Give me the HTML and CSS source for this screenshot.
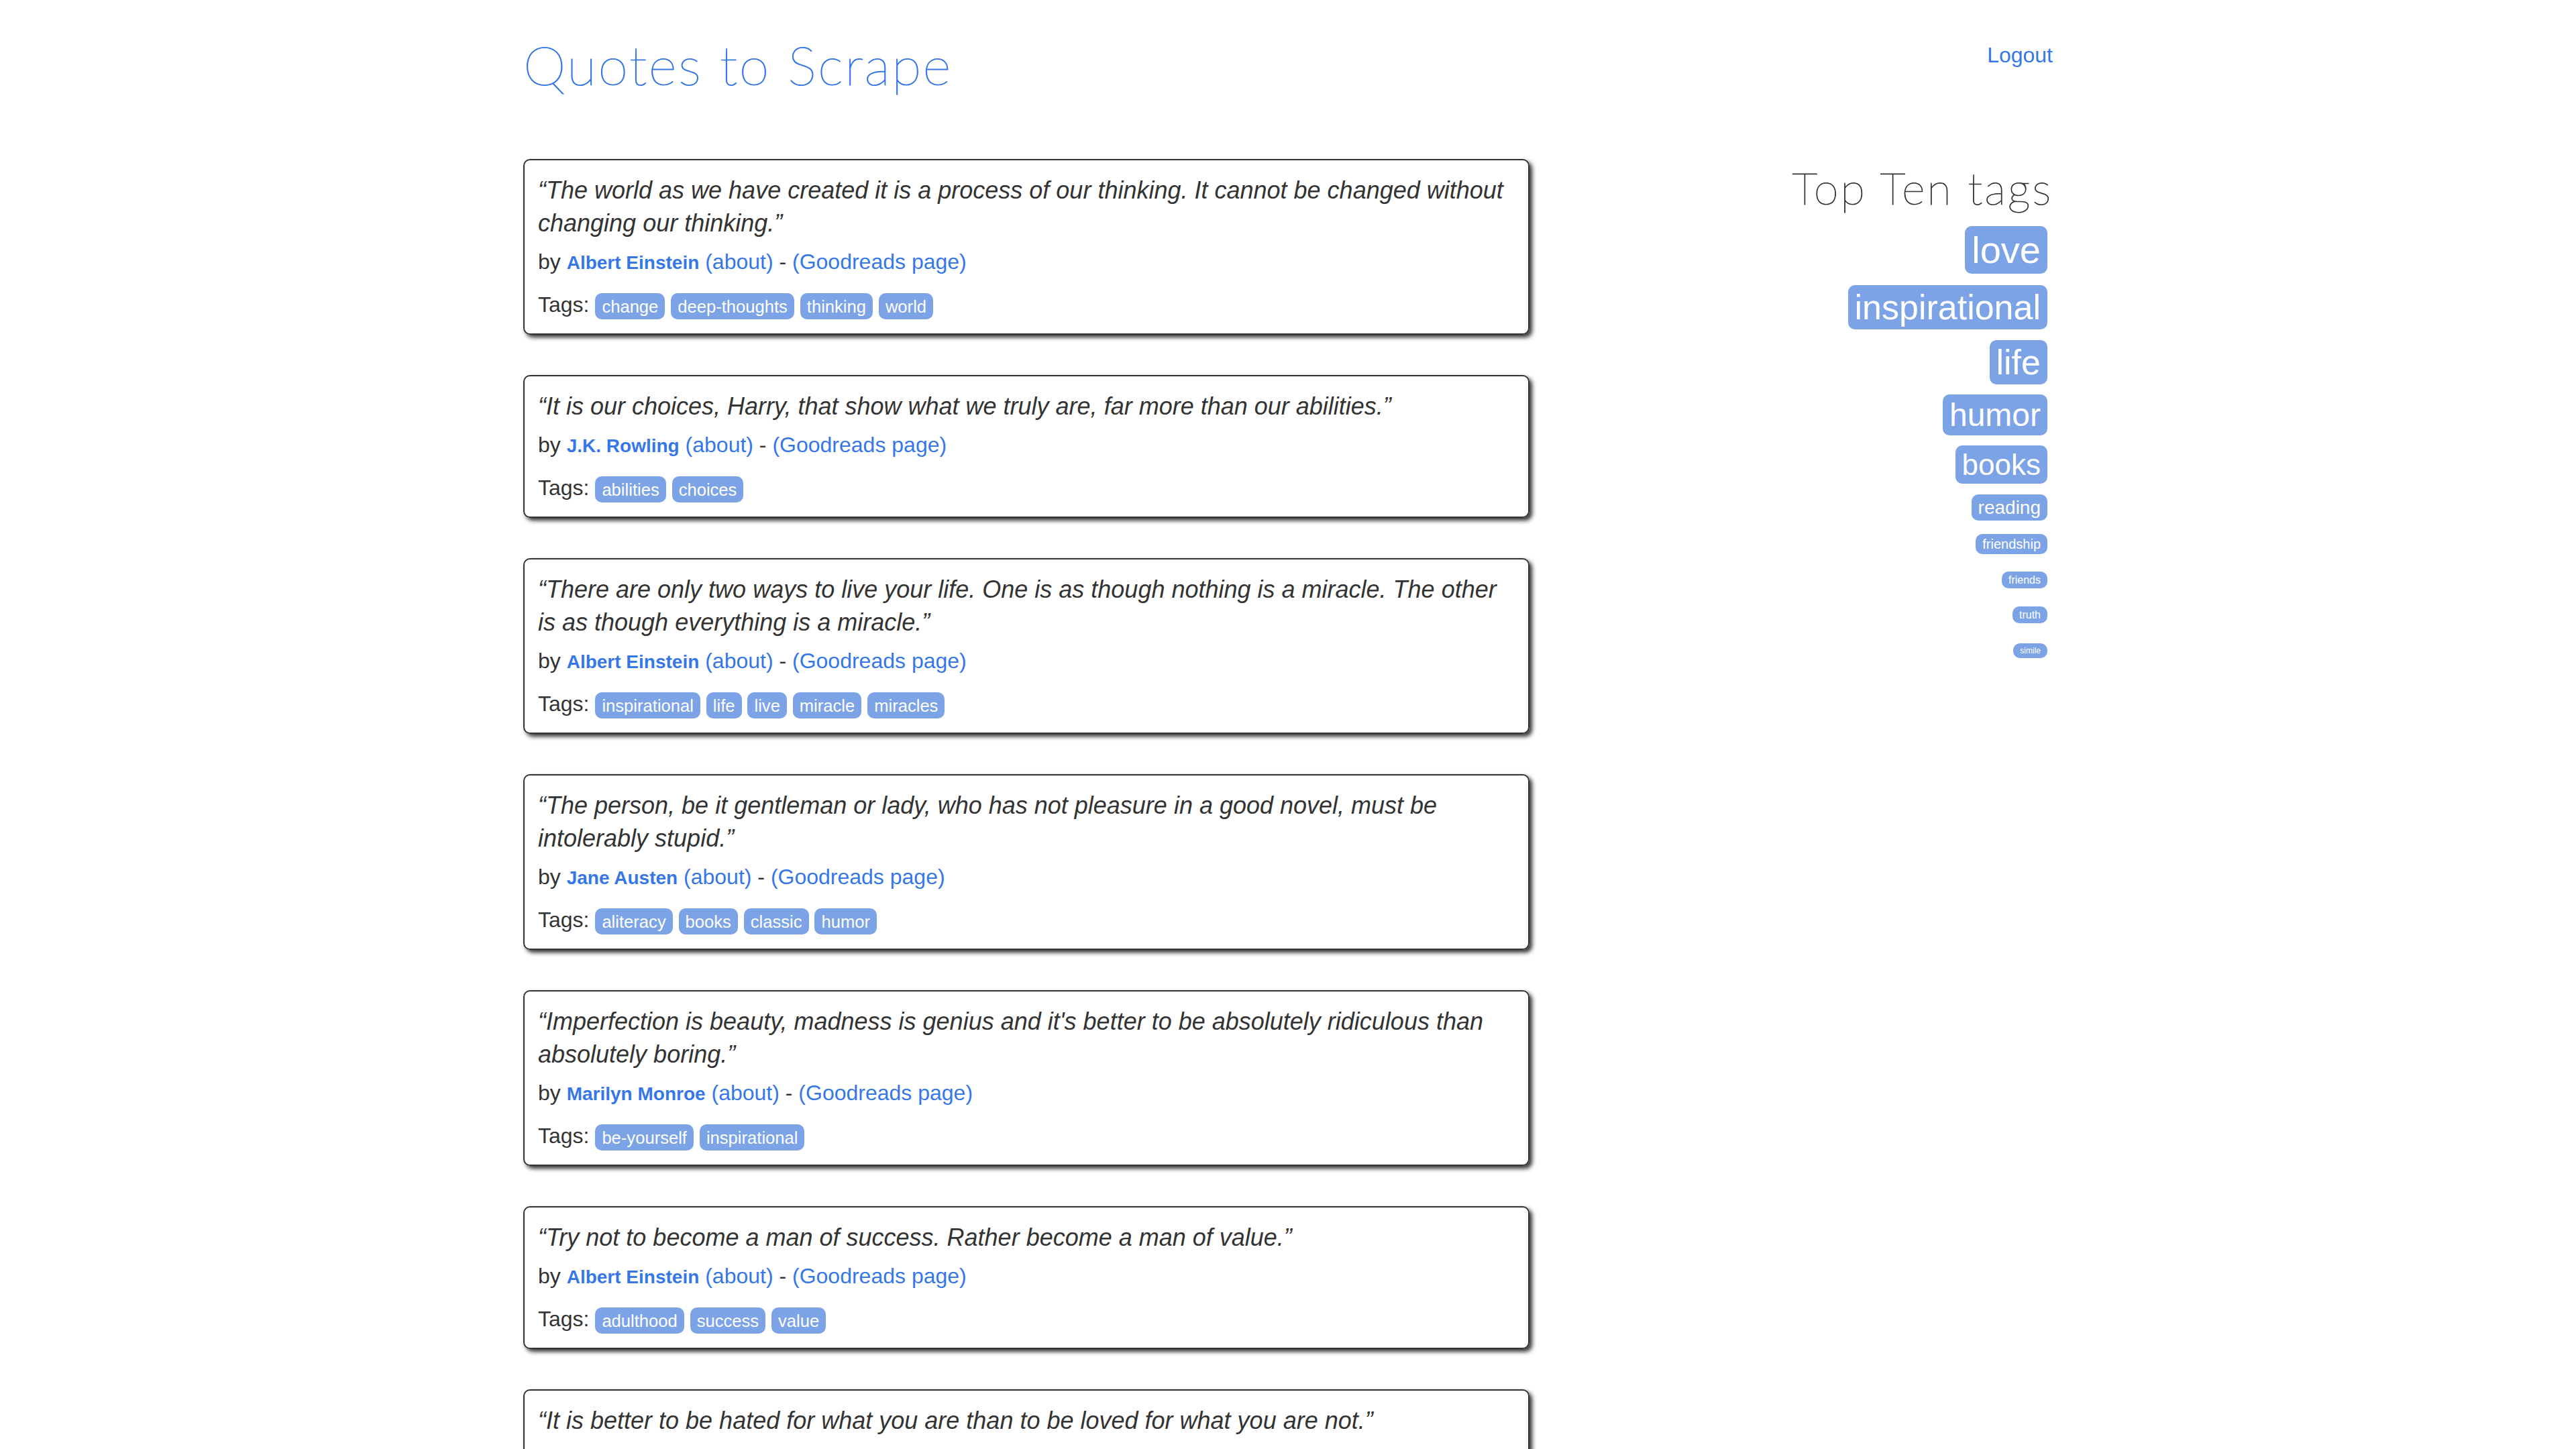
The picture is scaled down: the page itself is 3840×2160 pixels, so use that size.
FILE: index.html
```html
<!DOCTYPE html>
<html lang="en">
<head>
<meta charset="UTF-8">
<title>Quotes to Scrape</title>
<link rel="stylesheet" href="styles.css">
</head>
<body>
<div class="container">
  <div class="header-box">
    <h1 class="brand"><a href="#">Quotes to Scrape</a></h1>
    <p class="login"><a href="#">Logout</a></p>
  </div>
  <div class="row">
    <div class="quotes">
      <div class="quote">
        <span class="text">“The world as we have created it is a process of our thinking. It cannot be changed without changing our thinking.”</span>
        <span class="by">by <small class="author">Albert Einstein</small> <a href="#">(about)</a> - <a href="#">(Goodreads page)</a></span>
        <div class="tags">Tags: <a class="tag" href="#">change</a> <a class="tag" href="#">deep-thoughts</a> <a class="tag" href="#">thinking</a> <a class="tag" href="#">world</a></div>
      </div>
      <div class="quote">
        <span class="text">“It is our choices, Harry, that show what we truly are, far more than our abilities.”</span>
        <span class="by">by <small class="author">J.K. Rowling</small> <a href="#">(about)</a> - <a href="#">(Goodreads page)</a></span>
        <div class="tags">Tags: <a class="tag" href="#">abilities</a> <a class="tag" href="#">choices</a></div>
      </div>
      <div class="quote">
        <span class="text">“There are only two ways to live your life. One is as though nothing is a miracle. The other is as though everything is a miracle.”</span>
        <span class="by">by <small class="author">Albert Einstein</small> <a href="#">(about)</a> - <a href="#">(Goodreads page)</a></span>
        <div class="tags">Tags: <a class="tag" href="#">inspirational</a> <a class="tag" href="#">life</a> <a class="tag" href="#">live</a> <a class="tag" href="#">miracle</a> <a class="tag" href="#">miracles</a></div>
      </div>
      <div class="quote">
        <span class="text">“The person, be it gentleman or lady, who has not pleasure in a good novel, must be intolerably stupid.”</span>
        <span class="by">by <small class="author">Jane Austen</small> <a href="#">(about)</a> - <a href="#">(Goodreads page)</a></span>
        <div class="tags">Tags: <a class="tag" href="#">aliteracy</a> <a class="tag" href="#">books</a> <a class="tag" href="#">classic</a> <a class="tag" href="#">humor</a></div>
      </div>
      <div class="quote">
        <span class="text">“Imperfection is beauty, madness is genius and it's better to be absolutely ridiculous than absolutely boring.”</span>
        <span class="by">by <small class="author">Marilyn Monroe</small> <a href="#">(about)</a> - <a href="#">(Goodreads page)</a></span>
        <div class="tags">Tags: <a class="tag" href="#">be-yourself</a> <a class="tag" href="#">inspirational</a></div>
      </div>
      <div class="quote">
        <span class="text">“Try not to become a man of success. Rather become a man of value.”</span>
        <span class="by">by <small class="author">Albert Einstein</small> <a href="#">(about)</a> - <a href="#">(Goodreads page)</a></span>
        <div class="tags">Tags: <a class="tag" href="#">adulthood</a> <a class="tag" href="#">success</a> <a class="tag" href="#">value</a></div>
      </div>
      <div class="quote">
        <span class="text">“It is better to be hated for what you are than to be loved for what you are not.”</span>
        <span class="by">by <small class="author">André Gide</small> <a href="#">(about)</a> - <a href="#">(Goodreads page)</a></span>
        <div class="tags">Tags: <a class="tag" href="#">life</a> <a class="tag" href="#">love</a></div>
      </div>
      <div class="quote">
        <span class="text">“I have not failed. I've just found 10,000 ways that won't work.”</span>
        <span class="by">by <small class="author">Thomas A. Edison</small> <a href="#">(about)</a> - <a href="#">(Goodreads page)</a></span>
        <div class="tags">Tags: <a class="tag" href="#">edison</a> <a class="tag" href="#">failure</a> <a class="tag" href="#">inspirational</a> <a class="tag" href="#">paraphrased</a></div>
      </div>
      <div class="quote">
        <span class="text">“A woman is like a tea bag; you never know how strong it is until it's in hot water.”</span>
        <span class="by">by <small class="author">Eleanor Roosevelt</small> <a href="#">(about)</a> - <a href="#">(Goodreads page)</a></span>
        <div class="tags">Tags: <a class="tag" href="#">misattributed-eleanor-roosevelt</a></div>
      </div>
      <div class="quote">
        <span class="text">“A day without sunshine is like, you know, night.”</span>
        <span class="by">by <small class="author">Steve Martin</small> <a href="#">(about)</a> - <a href="#">(Goodreads page)</a></span>
        <div class="tags">Tags: <a class="tag" href="#">humor</a> <a class="tag" href="#">obvious</a> <a class="tag" href="#">simile</a></div>
      </div>
    </div>
    <div class="tags-box">
      <h2>Top Ten tags</h2>
      <span class="tag-item"><a class="tag" style="font-size: 56px" href="#">love</a></span>
      <span class="tag-item"><a class="tag" style="font-size: 52px" href="#">inspirational</a></span>
      <span class="tag-item"><a class="tag" style="font-size: 52px" href="#">life</a></span>
      <span class="tag-item"><a class="tag" style="font-size: 48px" href="#">humor</a></span>
      <span class="tag-item"><a class="tag" style="font-size: 44px" href="#">books</a></span>
      <span class="tag-item"><a class="tag" style="font-size: 28px" href="#">reading</a></span>
      <span class="tag-item"><a class="tag" style="font-size: 20px" href="#">friendship</a></span>
      <span class="tag-item"><a class="tag" style="font-size: 16px" href="#">friends</a></span>
      <span class="tag-item"><a class="tag" style="font-size: 16px" href="#">truth</a></span>
      <span class="tag-item"><a class="tag" style="font-size: 12px" href="#">simile</a></span>
    </div>
  </div>
</div>
</body>
</html>
```
FILE: styles.css
```css
html, body {
  margin: 0;
  padding: 0;
  background: #ffffff;
}
body {
  font-family: "Liberation Sans", Arial, Helvetica, sans-serif;
  font-size: 32px;
  line-height: 1.42857;
  color: #333333;
}
a {
  color: #3677E8;
  text-decoration: none;
}
.container {
  width: 2340px;
  margin: 0 auto;
  padding: 0 30px;
  box-sizing: border-box;
}
.header-box {
  display: flex;
  justify-content: space-between;
  align-items: flex-start;
  padding-bottom: 76px;
}
.brand {
  margin: 51px 0 20px 0;
  font-family: "Lato", "Open Sans", sans-serif;
  font-weight: 100;
  font-size: 81px;
  line-height: 90px;
  letter-spacing: 2.4px;
  -webkit-text-stroke: 1.1px #3677E8;
}
.brand a {
  color: #3677E8;
}
.login {
  margin: 60px 0 20px 0;
}
.row {
  display: grid;
  grid-template-columns: 1500px 720px;
  column-gap: 60px;
}
.quote {
  padding: 20px;
  margin-bottom: 60px;
  border: 2px solid #333333;
  border-radius: 10px;
  box-shadow: 4px 4px 6px #333333;
}
.quote .text {
  display: block;
  font-size: 36px;
  line-height: 49px;
  font-style: italic;
  margin-bottom: 10px;
}
.quote .by {
  display: block;
  line-height: 46px;
  margin-bottom: 16px;
}
.author {
  font-size: 28px;
  font-weight: bold;
  color: #3677E8;
}
.tags {
  line-height: 46px;
}
.tags .tag {
  font-size: 25.6px;
  line-height: 1.42857;
  padding: 5.5px 10px;
  border-radius: 10px;
  color: #ffffff;
  background-color: #7CA3E6;
}
.tags-box {
  text-align: right;
}
.tags-box h2 {
  margin: 6px 0 16px 0;
  font-family: "Lato", "Open Sans", sans-serif;
  font-weight: 100;
  font-size: 67px;
  line-height: 1.1;
  color: #333333;
  letter-spacing: 2.8px;
  -webkit-text-stroke: 0.9px #333333;
}
.tag-item {
  display: block;
  margin: 8px;
  line-height: 44px;
}
.tags-box .tag {
  padding: 4px 10px;
  border-radius: 10px;
  color: #ffffff;
  background-color: #7CA3E6;
  line-height: 1.42857;
}
```
